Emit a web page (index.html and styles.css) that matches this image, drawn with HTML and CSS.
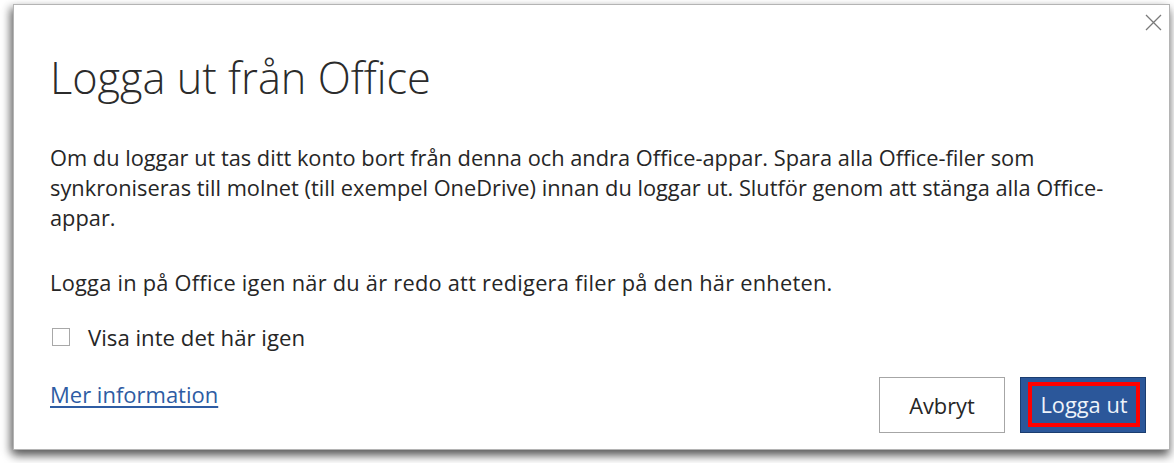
FILE: index.html
```html
<!DOCTYPE html>
<html lang="sv">
<head>
<meta charset="utf-8">
<title>Logga ut från Office</title>
<link rel="stylesheet" href="styles.css">
</head>
<body>
<div class="dialog">
  <button class="close" aria-label="Stäng">
    <svg width="17" height="17" viewBox="0 0 17 17"><path d="M1 1 L16 16 M16 1 L1 16" stroke="#7a7a7a" stroke-width="1.3" fill="none"/></svg>
  </button>
  <h1 class="title">Logga ut från Office</h1>
  <p class="text text-main">Om du loggar ut tas ditt konto bort från denna och andra Office-appar. Spara alla Office-filer som synkroniseras till molnet (till exempel OneDrive) innan du loggar ut. Slutför genom att stänga alla Office-appar.</p>
  <p class="text text-second">Logga in på Office igen när du är redo att redigera filer på den här enheten.</p>
  <label class="check-row"><span class="checkbox"></span><span class="check-label">Visa inte det här igen</span></label>
  <div class="footer">
    <a class="more" href="#">Mer information</a>
    <div class="buttons">
      <button class="btn btn-cancel">Avbryt</button>
      <button class="btn btn-primary"><span class="btn-inner">Logga ut</span></button>
    </div>
  </div>
</div>
</body>
</html>
```
FILE: styles.css
```css
html, body {
  margin: 0;
  padding: 0;
  background: #ffffff;
}
body {
  font-family: "Open Sans", "Noto Sans", sans-serif;
  color: #262626;
  height: 463px;
  overflow: hidden;
}
.dialog {
  position: relative;
  box-sizing: border-box;
  margin: 4px 0 0 13px;
  width: 1157px;
  height: 446px;
  border: 1px solid #b4b4b4;
  background: #fff;
  box-shadow: 0 6px 9px rgba(0,0,0,0.5), -4px 3px 8px rgba(0,0,0,0.3);
  padding: 0 0 0 36px;
  display: flex;
  flex-direction: column;
}
.close {
  position: absolute;
  top: 7px;
  right: 5px;
  width: 21px;
  height: 21px;
  padding: 2px;
  border: 0;
  background: transparent;
}
.title {
  margin: 45px 0 0 0;
  font-weight: 300;
  font-size: 43.3px;
  line-height: 56px;
  color: #2b2b2b;
}
.text {
  margin: 0;
  font-size: 21.8px;
  line-height: 30px;
  color: #262626;
}
.text-main {
  margin-top: 37px;
  width: 1055px;
}
.text-second {
  margin-top: 35px;
  letter-spacing: 0.25px;
}
.check-row {
  margin-top: 24px;
  display: flex;
  align-items: center;
  height: 30px;
}
.checkbox {
  box-sizing: border-box;
  width: 18px;
  height: 18px;
  border: 1px solid #a8a8a8;
  margin-left: 2px;
  background: #fff;
}
.check-label {
  margin-left: 18px;
  font-size: 22.2px;
  color: #262626;
}
.footer {
  margin-top: 25px;
  display: flex;
  justify-content: space-between;
  align-items: flex-start;
  padding-right: 23px;
}
.more {
  margin-top: 2px;
  font-size: 22px;
  line-height: 30px;
  color: #2e5ca3;
  text-decoration: underline;
  text-underline-offset: 3px;
}
.buttons {
  display: flex;
  gap: 15px;
}
.btn {
  box-sizing: border-box;
  width: 126px;
  height: 56px;
  font-family: inherit;
  font-size: 21.8px;
  padding: 0;
}
.btn-cancel {
  background: #fff;
  border: 1px solid #a6a6a6;
  color: #262626;
}
.btn-primary {
  background: #2b579a;
  border: 1px solid #1b3d70;
  color: #eef3fa;
  display: flex;
  align-items: stretch;
  justify-content: stretch;
  padding: 4px 5px 5px 7px;
}
.btn-inner {
  flex: 1;
  display: flex;
  align-items: center;
  justify-content: center;
  border: 4px solid #ff0000;
}
```
